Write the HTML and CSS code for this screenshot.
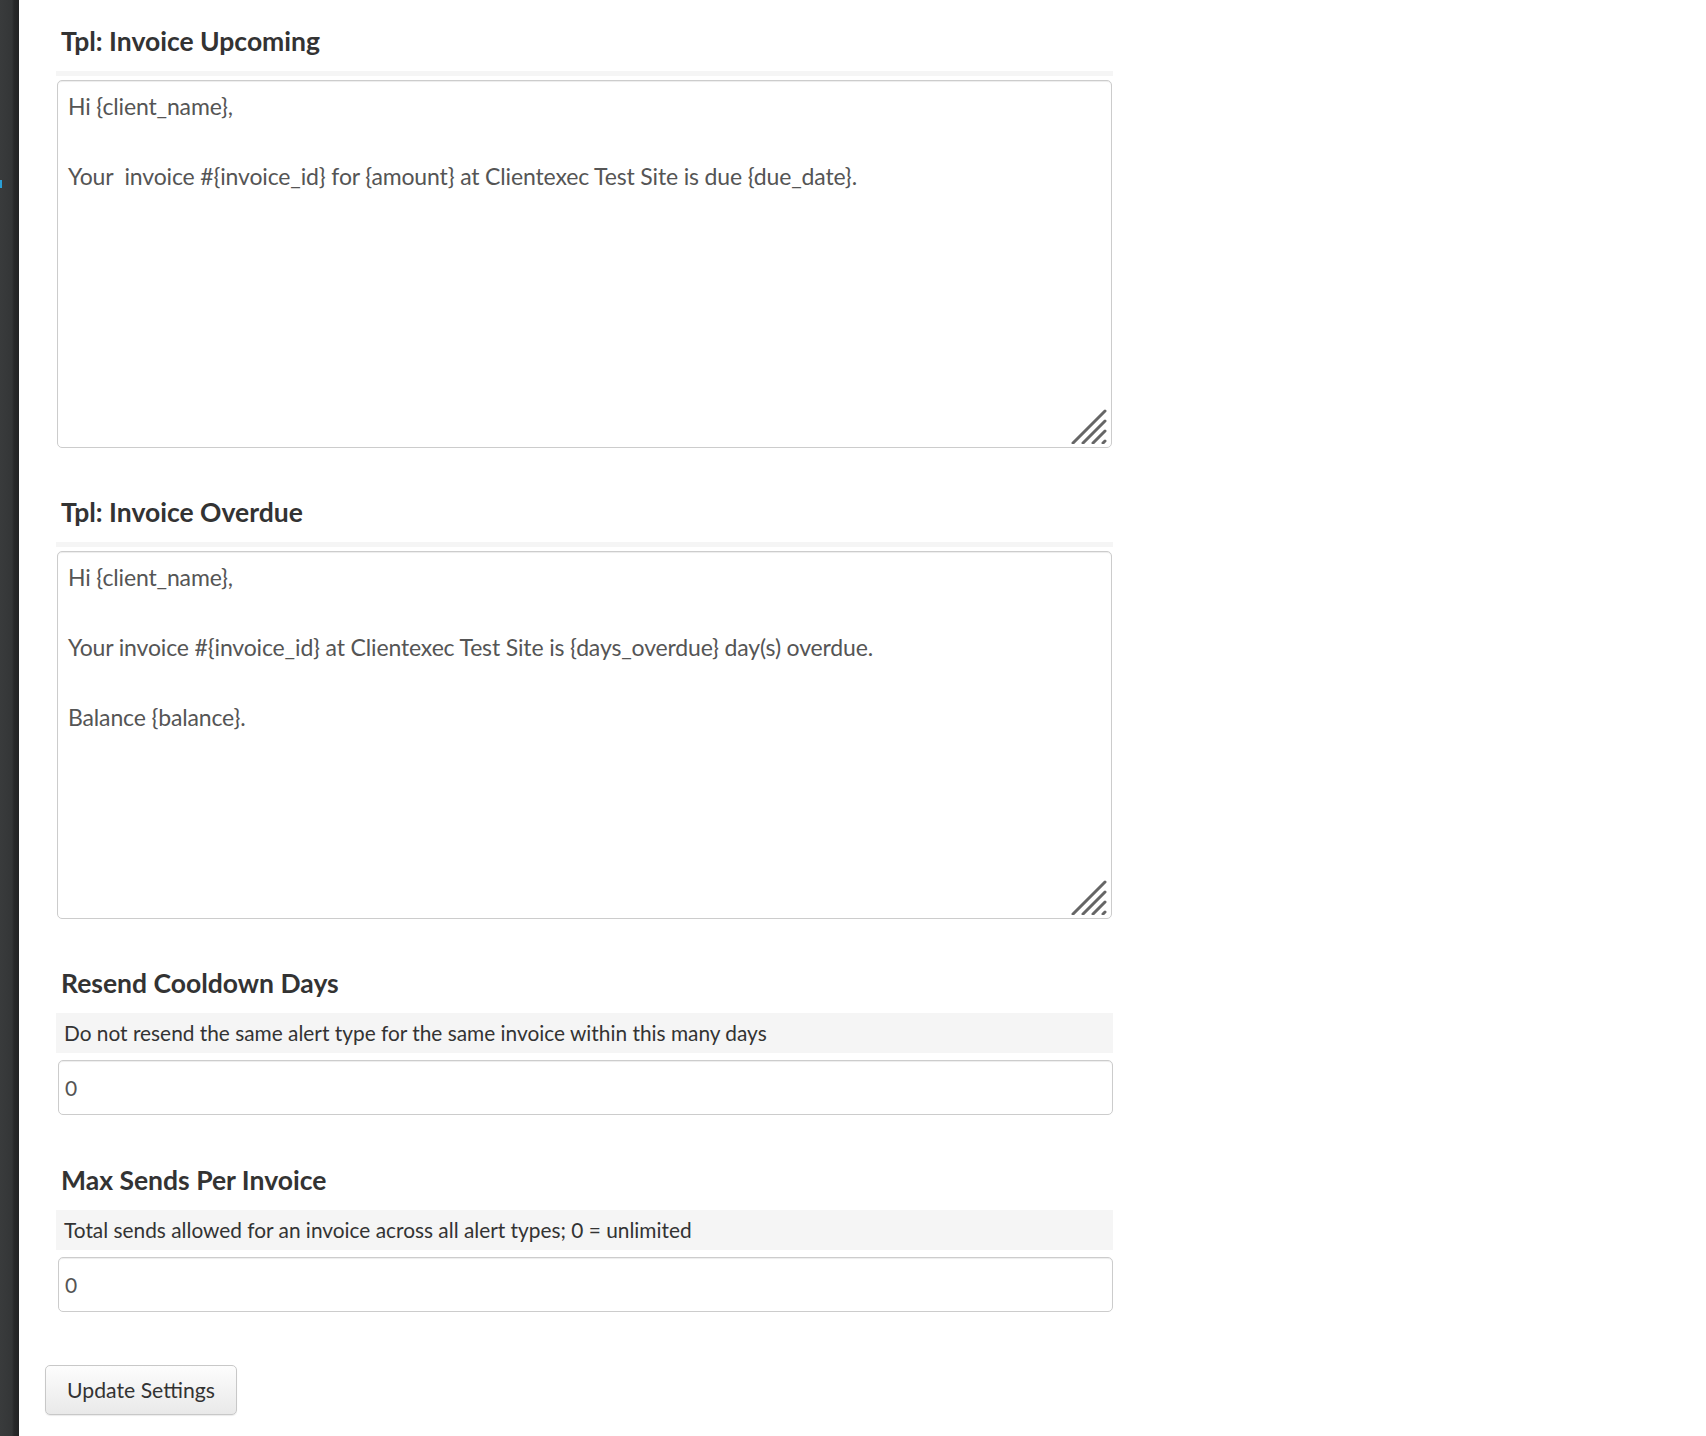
FILE: index.html
```html
<!DOCTYPE html>
<html>
<head>
<meta charset="utf-8">
<link rel="stylesheet" href="styles.css">
</head>
<body>
<div class="page">
  <aside class="sidebar"><span class="sidebar-mark"></span></aside>
  <main class="main">
    <form class="settings">
      <section class="field">
        <h3 class="field-title">Tpl: Invoice Upcoming</h3>
        <div class="field-desc field-desc-empty"></div>
        <div class="area-wrap">
          <textarea class="field-area">Hi {client_name},

Your  invoice #{invoice_id} for {amount} at Clientexec Test Site is due {due_date}.</textarea>
          <svg class="grip" width="36" height="36" viewBox="0 0 36 36"><g stroke="#666" stroke-width="3" stroke-linecap="round"><line x1="34" y1="3" x2="2" y2="35"/><line x1="34" y1="13" x2="12" y2="35"/><line x1="34" y1="23" x2="22" y2="35"/><line x1="34" y1="33" x2="32" y2="35"/></g></svg>
        </div>
      </section>

      <section class="field">
        <h3 class="field-title">Tpl: Invoice Overdue</h3>
        <div class="field-desc field-desc-empty"></div>
        <div class="area-wrap">
          <textarea class="field-area">Hi {client_name},

Your invoice #{invoice_id} at Clientexec Test Site is {days_overdue} day(s) overdue.

Balance {balance}.</textarea>
          <svg class="grip" width="36" height="36" viewBox="0 0 36 36"><g stroke="#666" stroke-width="3" stroke-linecap="round"><line x1="34" y1="3" x2="2" y2="35"/><line x1="34" y1="13" x2="12" y2="35"/><line x1="34" y1="23" x2="22" y2="35"/><line x1="34" y1="33" x2="32" y2="35"/></g></svg>
        </div>
      </section>

      <section class="field">
        <h3 class="field-title">Resend Cooldown Days</h3>
        <div class="field-desc">Do not resend the same alert type for the same invoice within this many days</div>
        <input class="field-input" type="text" value="0">
      </section>

      <section class="field field-after-input">
        <h3 class="field-title">Max Sends Per Invoice</h3>
        <div class="field-desc">Total sends allowed for an invoice across all alert types; 0 = unlimited</div>
        <input class="field-input" type="text" value="0">
      </section>

      <div class="actions">
        <button class="btn" type="button">Update Settings</button>
      </div>
    </form>
  </main>
</div>
</body>
</html>
```

FILE: styles.css
```css
html, body {
  margin: 0;
  padding: 0;
  background: #fff;
}

body {
  font-family: Lato, "Open Sans", "Liberation Sans", sans-serif;
  color: #333;
}

.page {
  display: flex;
  min-height: 1436px;
}

.sidebar {
  width: 19px;
  flex: 0 0 19px;
  background: linear-gradient(to right, #393b3c 0, #343637 12px, #28292a 14px, #222324 19px);
}

.sidebar-mark {
  display: block;
  width: 2px;
  height: 8px;
  margin-top: 180px;
  background: #2a9fd6;
}

.main {
  flex: 1;
  padding-left: 37px;
}

.settings {
  width: 1057px;
  display: flex;
  flex-direction: column;
}

.field {
  display: flex;
  flex-direction: column;
}

.field-title {
  margin: 25px 0 14px;
  padding-left: 5px;
  font-size: 26.5px;
  line-height: 32px;
  font-weight: 700;
  color: #333;
}

.field + .field .field-title {
  margin-top: 48px;
}

.field + .field-after-input .field-title {
  margin-top: 49px;
}

.field-desc {
  background: #f5f5f5;
  height: 40px;
  padding-left: 8px;
  font-size: 20.85px;
  line-height: 40px;
  color: #333;
  margin-bottom: 7px;
}

.field-desc-empty {
  height: 5px;
  margin-bottom: 4px;
}

.area-wrap {
  position: relative;
  margin-left: 1px;
  width: 1055px;
}

.field-area {
  display: block;
  box-sizing: border-box;
  width: 1055px;
  height: 368px;
  margin: 0;
  padding: 8px 10px;
  border: 1px solid #ccc;
  border-radius: 5px;
  box-shadow: inset 0 1px 1px rgba(0, 0, 0, 0.075);
  font-family: Lato, "Open Sans", "Liberation Sans", sans-serif;
  font-size: 23px;
  letter-spacing: -0.15px;
  line-height: 35px;
  color: #555;
  resize: none;
  outline: none;
}

.grip {
  position: absolute;
  right: 5px;
  bottom: 4px;
}

.field-input {
  display: block;
  box-sizing: border-box;
  width: 1055px;
  height: 55px;
  margin: 0 0 0 2px;
  padding: 0 6px;
  border: 1px solid #ccc;
  border-radius: 5px;
  box-shadow: inset 0 1px 1px rgba(0, 0, 0, 0.075);
  font-family: Lato, "Open Sans", "Liberation Sans", sans-serif;
  font-size: 21px;
  color: #555;
  outline: none;
}

.actions {
  padding-top: 53px;
  margin-left: -11px;
}

.btn {
  box-sizing: border-box;
  width: 192px;
  height: 50px;
  padding: 0;
  border: 1px solid #c8c8c8;
  border-radius: 5px;
  background: linear-gradient(to bottom, #fdfdfd 0, #e9e9e9 100%);
  box-shadow: 0 1px 1px rgba(0, 0, 0, 0.08);
  font-family: Lato, "Open Sans", "Liberation Sans", sans-serif;
  font-size: 21.2px;
  color: #333;
}
```
